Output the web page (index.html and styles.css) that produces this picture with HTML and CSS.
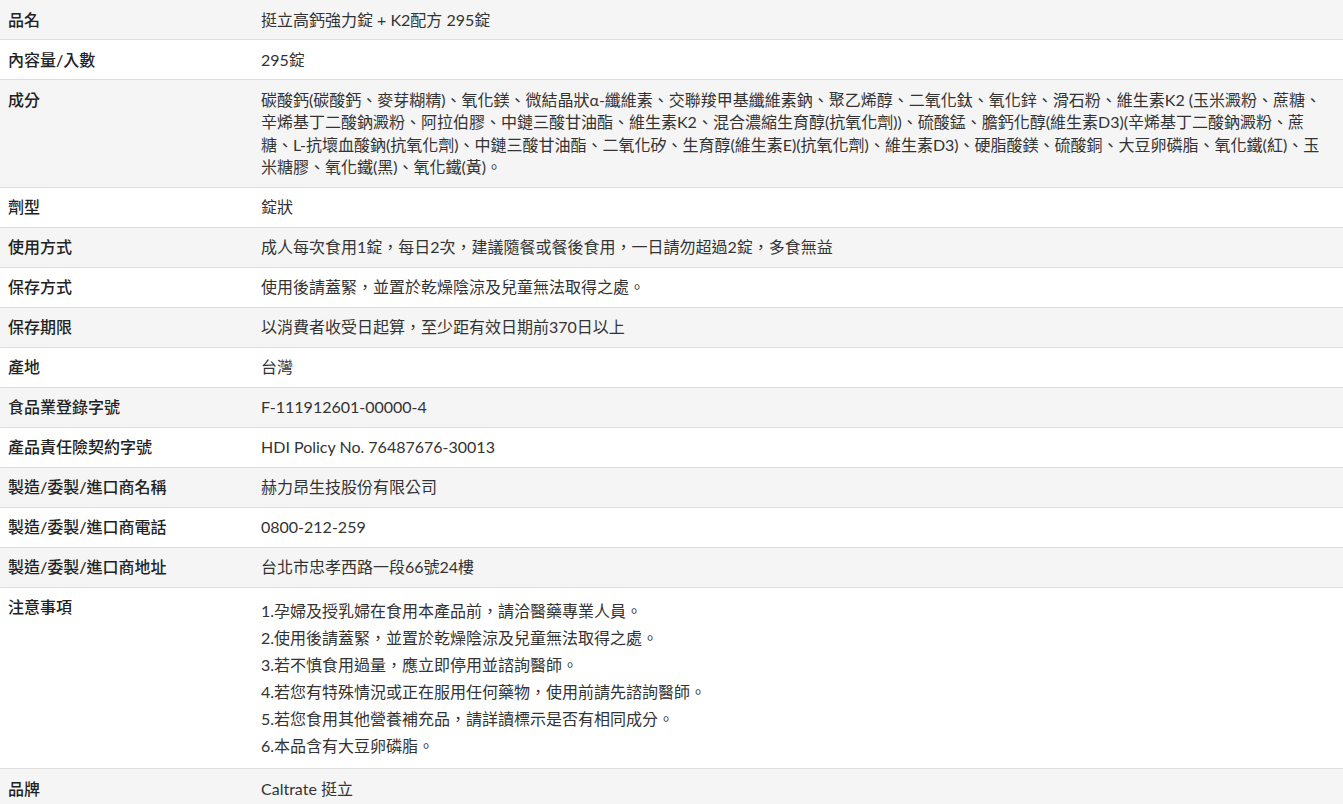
FILE: index.html
```html
<!DOCTYPE html>
<html lang="zh-Hant">
<head>
<meta charset="utf-8">
<title>商品規格</title>
<link rel="stylesheet" href="styles.css">
</head>
<body>
<table class="spec">
  <tbody>
    <tr><th>品名</th><td>挺立高鈣強力錠 + K2配方 295錠</td></tr>
    <tr><th>內容量/入數</th><td>295錠</td></tr>
    <tr><th>成分</th><td>碳酸鈣(碳酸鈣、麥芽糊精)、氧化鎂、微結晶狀α-纖維素、交聯羧甲基纖維素鈉、聚乙烯醇、二氧化鈦、氧化鋅、滑石粉、維生素K2 (玉米澱粉、蔗糖、辛烯基丁二酸鈉澱粉、阿拉伯膠、中鏈三酸甘油酯、維生素K2、混合濃縮生育醇(抗氧化劑))、硫酸錳、膽鈣化醇(維生素D3)(辛烯基丁二酸鈉澱粉、蔗糖、L-抗壞血酸鈉(抗氧化劑)、中鏈三酸甘油酯、二氧化矽、生育醇(維生素E)(抗氧化劑)、維生素D3)、硬脂酸鎂、硫酸銅、大豆卵磷脂、氧化鐵(紅)、玉米糖膠、氧化鐵(黑)、氧化鐵(黃)。</td></tr>
    <tr><th>劑型</th><td>錠狀</td></tr>
    <tr><th>使用方式</th><td>成人每次食用1錠，每日2次，建議隨餐或餐後食用，一日請勿超過2錠，多食無益</td></tr>
    <tr><th>保存方式</th><td>使用後請蓋緊，並置於乾燥陰涼及兒童無法取得之處。</td></tr>
    <tr><th>保存期限</th><td>以消費者收受日起算，至少距有效日期前370日以上</td></tr>
    <tr><th>產地</th><td>台灣</td></tr>
    <tr><th>食品業登錄字號</th><td>F-111912601-00000-4</td></tr>
    <tr><th>產品責任險契約字號</th><td>HDI Policy No. 76487676-30013</td></tr>
    <tr><th>製造/委製/進口商名稱</th><td>赫力昂生技股份有限公司</td></tr>
    <tr><th>製造/委製/進口商電話</th><td>0800-212-259</td></tr>
    <tr><th>製造/委製/進口商地址</th><td>台北市忠孝西路一段66號24樓</td></tr>
    <tr>
      <th>注意事項</th>
      <td class="notes">
        <p>1.孕婦及授乳婦在食用本產品前，請洽醫藥專業人員。</p>
        <p>2.使用後請蓋緊，並置於乾燥陰涼及兒童無法取得之處。</p>
        <p>3.若不慎食用過量，應立即停用並諮詢醫師。</p>
        <p>4.若您有特殊情況或正在服用任何藥物，使用前請先諮詢醫師。</p>
        <p>5.若您食用其他營養補充品，請詳讀標示是否有相同成分。</p>
        <p>6.本品含有大豆卵磷脂。</p>
      </td>
    </tr>
    <tr><th>品牌</th><td>Caltrate 挺立</td></tr>
  </tbody>
</table>
</body>
</html>
```

FILE: styles.css
```css
html, body {
  margin: 0;
  padding: 0;
  background: #ffffff;
}

body {
  font-family: "Lato", "Noto Sans CJK TC", sans-serif;
  font-size: 16px;
  color: #333333;
}

.spec {
  width: 100%;
  border-collapse: collapse;
}

.spec tr {
  border-bottom: 1px solid #dddddd;
}

.spec tr:nth-child(odd) {
  background: #f5f5f5;
}

.spec th,
.spec td {
  padding: 8.5px 8px 8px;
  line-height: 22.5px;
  vertical-align: top;
  text-align: left;
}

.spec th {
  width: 237px;
  font-weight: 500;
  color: #222222;
}

.spec td {
  font-weight: 400;
}

.spec td.notes {
  padding-top: 9px;
  padding-bottom: 9.5px;
}

.notes p {
  margin: 0;
  line-height: 27px;
}
```
